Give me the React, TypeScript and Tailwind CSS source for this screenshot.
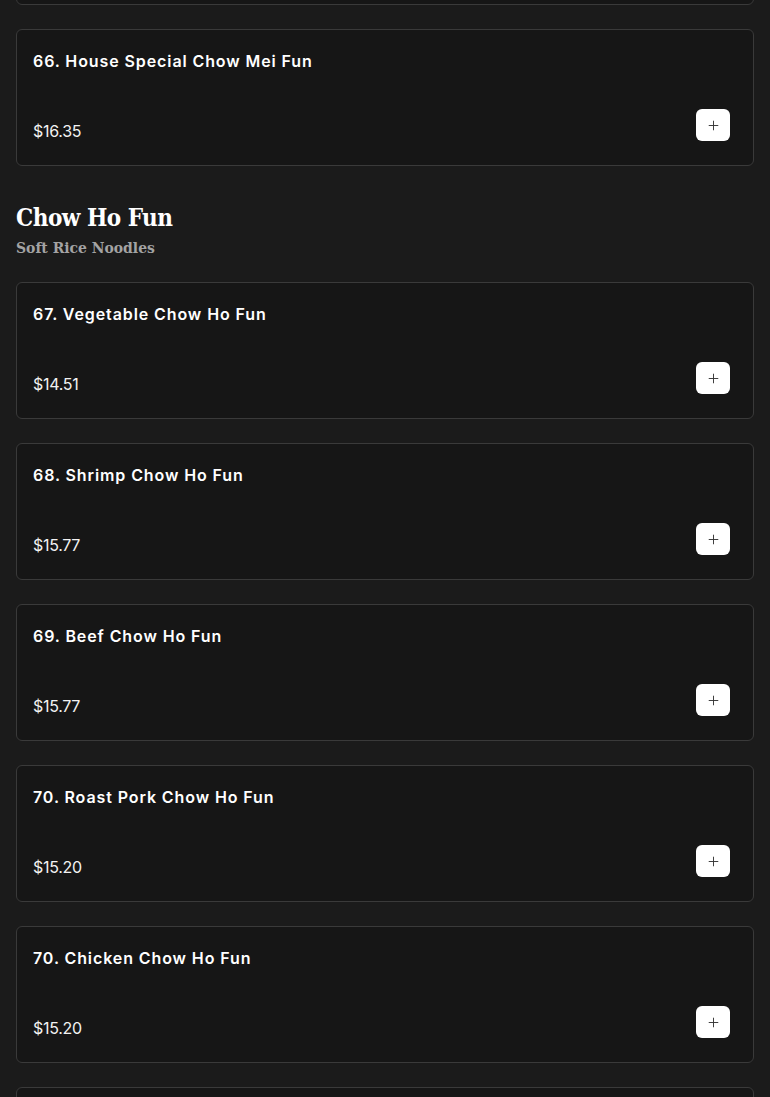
import { Plus } from "lucide-react";

type Item = { name: string; price: string };

const chowMeiFun: Item[] = [
  { name: "65. Chicken Chow Mei Fun", price: "$15.20" },
  { name: "66. House Special Chow Mei Fun", price: "$16.35" },
];

const chowHoFun: Item[] = [
  { name: "67. Vegetable Chow Ho Fun", price: "$14.51" },
  { name: "68. Shrimp Chow Ho Fun", price: "$15.77" },
  { name: "69. Beef Chow Ho Fun", price: "$15.77" },
  { name: "70. Roast Pork Chow Ho Fun", price: "$15.20" },
  { name: "70. Chicken Chow Ho Fun", price: "$15.20" },
  { name: "71. House Special Chow Ho Fun", price: "$16.35" },
];

function MenuCard({ item }: { item: Item }) {
  return (
    <div className="flex h-[137px] flex-col justify-between rounded-md border border-[#3a3a3a] bg-[#161616] px-4 pt-[19px] pb-[22px]">
      <h3 className="text-base leading-6 font-semibold tracking-[0.9px] text-white">
        {item.name}
      </h3>
      <div className="flex items-end justify-between">
        <span className="text-base leading-6 tracking-[-0.3px] text-[#f2f2f2]">{item.price}</span>
        <button className="mr-[7px] mb-[2px] flex h-8 w-[34px] items-center justify-center rounded-md bg-white text-[#333]">
          <Plus size={15} strokeWidth={1.5} />
        </button>
      </div>
    </div>
  );
}

export default function App() {
  return (
    <div
      className="min-h-screen overflow-hidden bg-[#1b1b1b] px-4"
      style={{ fontFamily: "Inter, 'Open Sans', sans-serif" }}
    >
      {/* tail of the previous section */}
      <div className="-mt-[132px] flex flex-col gap-6">
        {chowMeiFun.map((item) => (
          <MenuCard key={item.name} item={item} />
        ))}
      </div>

      <div className="mt-9 mb-6" style={{ fontFamily: "'DejaVu Serif', serif" }}>
        <h2 className="text-[24px] leading-8 font-black font-stretch-condensed tracking-[-0.5px] text-white">
          Chow Ho Fun
        </h2>
        <p className="mt-1 text-[15.5px] leading-5 font-bold font-stretch-condensed text-[#a3a3a3]">
          Soft Rice Noodles
        </p>
      </div>

      <div className="flex flex-col gap-6 pb-6">
        {chowHoFun.map((item) => (
          <MenuCard key={item.name} item={item} />
        ))}
      </div>
    </div>
  );
}
